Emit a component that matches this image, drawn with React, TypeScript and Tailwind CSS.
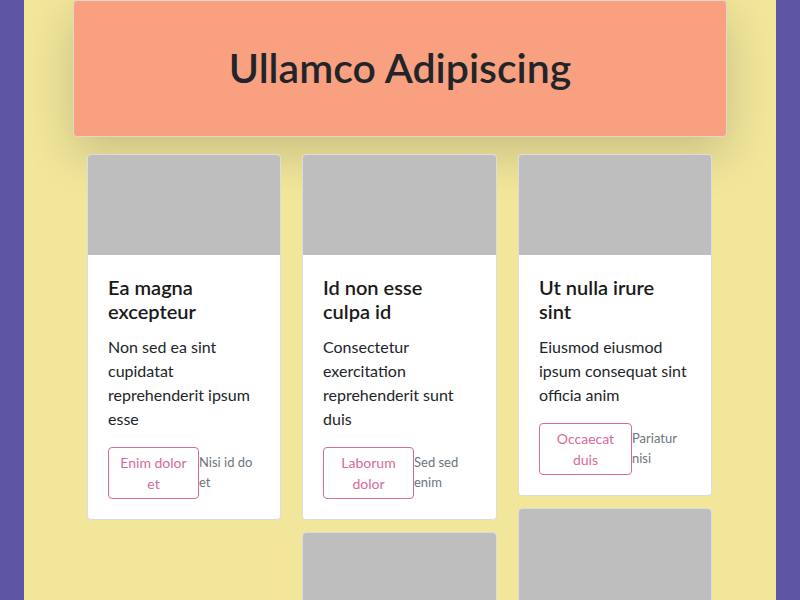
import React from 'react';

type CardData = {
  title?: React.ReactNode;
  body?: string;
  btn?: string;
  btnW?: string;
  note?: string;
  imageOnly?: boolean;
};

function Card({ c }: { c: CardData }) {
  return (
    <div className="mb-[12px] overflow-hidden rounded-[4px] border border-[#dcdcdc] bg-white">
      <div className="h-[100px] bg-[#bebebe]" />
      {!c.imageOnly && (
        <div className="p-5">
          <h5 className="mb-3 text-[20px] font-semibold leading-[24px] text-[#1a1a1a]">{c.title}</h5>
          <p className="mb-4 text-[16px] leading-[24px] text-[#212529]">{c.body}</p>
          <div className="flex items-start">
            <button
              className={`${c.btnW} shrink-0 rounded-[4px] border border-[#d66a9c] px-2 py-1 text-center text-[14px] leading-[21px] text-[#d66a9c]`}
            >
              {c.btn}
            </button>
            <span className="pt-[5px] text-[13px] leading-[20px] text-[#6c757d]">{c.note}</span>
          </div>
        </div>
      )}
      {c.imageOnly && <div className="h-[120px]" />}
    </div>
  );
}

export default function App() {
  const col1: CardData[] = [
    {
      title: 'Ea magna excepteur',
      body: 'Non sed ea sint cupidatat reprehenderit ipsum esse',
      btn: 'Enim dolor et',
      btnW: 'w-[91px]',
      note: 'Nisi id do et',
    },
  ];
  const col2: CardData[] = [
    {
      title: (
        <>
          Id non esse
          <br />
          culpa id
        </>
      ),
      body: 'Consectetur exercitation reprehenderit sunt duis',
      btn: 'Laborum dolor',
      btnW: 'w-[91px]',
      note: 'Sed sed enim',
    },
    { imageOnly: true },
  ];
  const col3: CardData[] = [
    {
      title: (
        <>
          Ut nulla irure
          <br />
          sint
        </>
      ),
      body: 'Eiusmod eiusmod ipsum consequat sint officia anim',
      btn: 'Occaecat duis',
      btnW: 'w-[93px]',
      note: 'Pariatur nisi',
    },
    { imageOnly: true },
  ];
  return (
    <div
      className="h-[600px] overflow-hidden bg-[#5e55a5] px-[24px]"
      style={{ fontFamily: 'Lato, "Noto Sans", sans-serif' }}
    >
      <div className="h-full bg-[#f2e69b] px-[49px]">
        <header className="flex h-[137px] items-center justify-center rounded-[4px] border border-[#e2d6d0] bg-[#f8a07f] shadow-[0_1rem_3rem_rgba(0,0,0,0.175)]">
          <h1 className="mt-[-2px] text-[41px] font-semibold leading-[48px] text-[#212529]">Ullamco Adipiscing</h1>
        </header>
        <div className="ml-[14px] mt-[17px] grid grid-cols-[194px_195px_194px] items-start gap-x-[21px]">
          <div className="flex flex-col">
            {col1.map((c, i) => (
              <Card key={i} c={c} />
            ))}
          </div>
          <div className="flex flex-col">
            {col2.map((c, i) => (
              <Card key={i} c={c} />
            ))}
          </div>
          <div className="flex flex-col">
            {col3.map((c, i) => (
              <Card key={i} c={c} />
            ))}
          </div>
        </div>
      </div>
    </div>
  );
}
